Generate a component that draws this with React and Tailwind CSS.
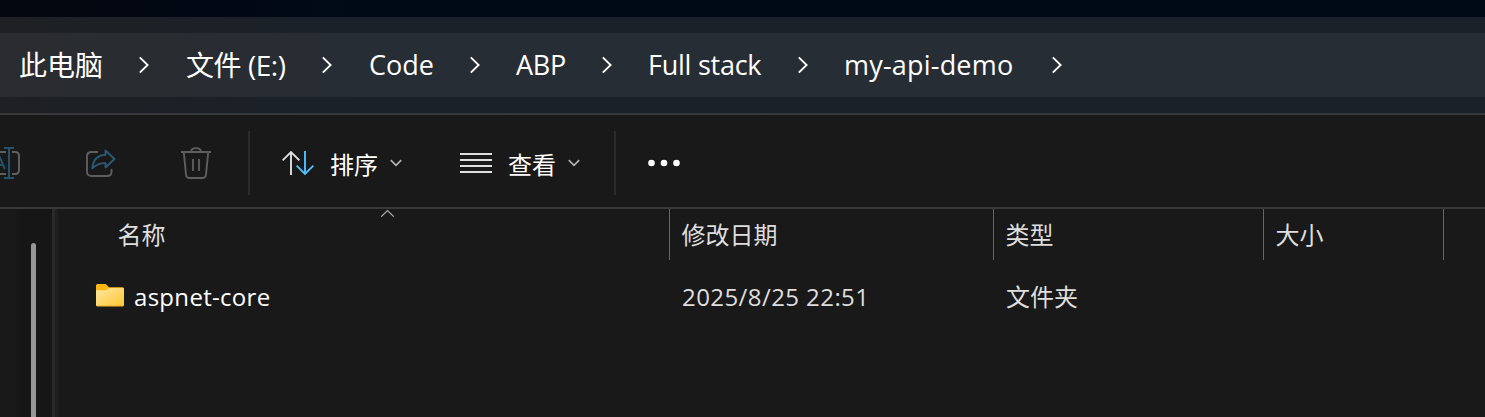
const crumbs = [
  { label: '此电脑', text: 'w-[119px] text-[28px] -ml-px mr-px' },
  { label: '文件 (E:)', text: 'w-[136px] text-[28px] tracking-[-0.45px]' },
  { label: 'Code', text: 'w-[101px] text-[27px]' },
  { label: 'ABP', text: 'w-[86px] text-[27px] tracking-[-0.3px]' },
  { label: 'Full stack', text: 'w-[150px] text-[27px] tracking-[-0.25px]' },
  { label: 'my-api-demo', text: 'w-[208px] text-[27px] tracking-[0.2px]' },
];
const gaps = ['w-[47px]', 'w-[47px]', 'w-[46px]', 'w-[46px]', 'w-[46px]', 'w-[46px]'];

function Crumb({ label, text, gap }) {
  return (
    <>
      <span className={`shrink-0 ${text}`}>{label}</span>
      <span className={`shrink-0 ${gap}`}>
        <svg className="block" width="11" height="18" viewBox="0 0 11 18" fill="none" stroke="#fff" strokeWidth="1.9">
          <path d="M.8 1.4 8.600 9 .8 16.600" />
        </svg>
      </span>
    </>
  );
}

function ChevronDown() {
  return (
    <svg className="block shrink-0" width="12" height="8" viewBox="0 0 12 8" fill="none" stroke="#b4b4b4" strokeWidth="1.7">
      <path d="M0.8 1.2 6 6.4 11.2 1.2" />
    </svg>
  );
}

function RenameIcon() {
  return (
    <svg className="block shrink-0" width="24" height="36" viewBox="0 0 24 36" fill="none" strokeWidth="2">
      <path d="M0 7H6M12 7H15Q19 7 19 11V25Q19 29 15 29H12M0 29H6" stroke="#5e5e5e" />
      <path d="M9 3V33M4 3H14M4 33H14M-5 24 -.3 12 4.8 24M0 20H3.3" stroke="#265369" />
    </svg>
  );
}

function ShareIcon() {
  return (
    <svg className="block shrink-0" width="32" height="36" viewBox="0 0 32 36" fill="none" strokeWidth="1.9">
      <path d="M13 7H6.5Q2 7 2 11.5V26.5Q2 31 6.5 31H22Q26.500 31 26.500 27V24" stroke="#5e5e5e" />
      <path d="M20.500 5.500 29.500 14 20.500 22.500V18.200C15 17.800 11.500 19.500 7.300 23.300C8 15 13 10.300 20.500 9.800Z" stroke="#2a5a74" strokeLinejoin="round" />
    </svg>
  );
}

function TrashIcon() {
  return (
    <svg className="block shrink-0" width="32" height="36" viewBox="0 0 32 36" fill="none" stroke="#5e5e5e" strokeWidth="1.9">
      <path d="M1 7H31M11 6.500C11.500 2 20.500 2 21 6.500M3.800 7.500 6 29.500Q6.400 33 9 33H23Q25.600 33 26 29.500L28.200 7.500M13 14V26M19 14V26" />
    </svg>
  );
}

function FolderIcon() {
  return (
    <svg className="block shrink-0" width="28" height="23" viewBox="0 0 28 23">
      <defs>
        <linearGradient id="folderFront" x1="0" y1="0" x2="1" y2="1">
          <stop offset="0" stopColor="#ffe8a2" />
          <stop offset="1" stopColor="#fcc633" />
        </linearGradient>
      </defs>
      <path d="M0 1.500Q0 0 1.500 0H9Q10 0 10.800 .9L13 3.200H26.500Q28 3.200 28 4.700V20H0Z" fill="#fbb814" />
      <path d="M0 7.200Q0 6.200 1 6.200H9.500Q10.800 6.200 11.600 5.400L12.700 4.400Q13.300 4 14 4H27Q28 4 28 5V21Q28 22.300 26.800 22.300H1.200Q0 22.300 0 21Z" fill="url(#folderFront)" />
      <path d="M.5 21.500Q.8 22 1.300 22H26.700Q27.200 22 27.500 21.500" fill="none" stroke="#e5a520" strokeWidth=".8" />
    </svg>
  );
}

function Column({ width, children }) {
  return <div className={`h-[51px] shrink-0 border-l border-[#666] pl-[11.5px] leading-[52px] ${width}`}>{children}</div>;
}

export default function App() {
  return (
    <div className="flex h-[417px] w-[1485px] flex-col overflow-hidden bg-[#191919] font-['Open_Sans','Noto_Sans_CJK_SC',sans-serif] whitespace-nowrap text-white">
      <div className="h-[17px] shrink-0 bg-linear-to-r from-[#03060e] via-[#000a17] via-25% to-[#000a17]" />
      <div className="h-[96px] shrink-0 bg-linear-to-r from-[#1e2023] to-[#1b2129] to-20% py-4">
        <nav className="flex h-16 items-center bg-linear-to-r from-[#2a2c2f] to-[#272d35] to-25% pl-5 leading-[64px]">
          {crumbs.map((c, i) => (
            <Crumb key={c.label} label={c.label} text={c.text} gap={gaps[i]} />
          ))}
        </nav>
      </div>
      <div className="flex h-[96px] shrink-0 items-center border-y-2 border-[#393939] pt-1 text-2xl">
        <div className="flex w-[248px] shrink-0 items-center">
          <RenameIcon />
          <div className="ml-[61px]"><ShareIcon /></div>
          <div className="ml-[63px]"><TrashIcon /></div>
        </div>
        <div className="h-16 w-0.5 shrink-0 bg-[#2b2b2b]" />
        <div className="flex h-16 w-[364px] shrink-0 items-center pl-8">
          <svg className="block shrink-0" width="32" height="26" viewBox="0 0 32 26" fill="none" strokeWidth="1.9">
            <path d="M9 25V2M.6 10.400 9 2 17.400 10.400" stroke="#e0e0e0" />
            <path d="M23 1V24M14.600 15.600 23 24 31.400 15.600" stroke="#4cc2ff" />
          </svg>
          <span className="box-content w-[60px] shrink-0 pt-1 pl-4">排序</span>
          <ChevronDown />
          <svg className="ml-[58px] block shrink-0" width="32" height="20" viewBox="0 0 32 20" stroke="#e0e0e0" strokeWidth="2">
            <path d="M0 1H32M0 7H32M0 13H32M0 19H32" />
          </svg>
          <span className="box-content w-[60px] shrink-0 pt-1 pl-4">查看</span>
          <ChevronDown />
        </div>
        <div className="h-16 w-0.5 shrink-0 bg-[#2b2b2b]" />
        <svg className="ml-8 block shrink-0" width="32" height="8" viewBox="0 0 32 8" fill="#fff">
          <circle cx="3.500" cy="4" r="3.300" />
          <circle cx="16" cy="4" r="3.300" />
          <circle cx="28.500" cy="4" r="3.300" />
        </svg>
      </div>
      <div className="flex min-h-0 flex-1">
        <aside className="flex w-[52px] shrink-0 bg-linear-to-r from-[#191919] from-30% to-[#161616] to-35% pt-[34px] pl-[31px]">
          <div className="w-[5px] rounded-t-full bg-[#979797]" />
        </aside>
        <div className="w-[3px] shrink-0 bg-[#2a2a2a]" />
        <div className="w-[3px] shrink-0 bg-[#1f1f1f]" />
        <main className="flex-1 text-2xl text-[#dedede]">
          <div className="flex h-[51px]">
            <div className="relative w-[611px] shrink-0 pl-[59.5px] leading-[52px]">
              名称
              <svg className="absolute top-0 left-[323px]" width="14" height="8" viewBox="0 0 14 8" fill="none" stroke="#ababab" strokeWidth="1.200">
                <path d="M.2 7.700 6.500 1.500 12.800 7.700" />
              </svg>
            </div>
            <Column width="w-[324px]">修改日期</Column>
            <Column width="w-[270px]">类型</Column>
            <Column width="w-[180px]">大小</Column>
            <Column width="w-[42px]" />
          </div>
          <div className="flex h-[74px] items-center leading-[74px]">
            <div className="flex w-[624px] shrink-0 items-center pl-[38px] text-white">
              <div className="-mt-1"><FolderIcon /></div>
              <span className="pl-[10px] tracking-[0.3px]">aspnet-core</span>
            </div>
            <span className="w-[324px] shrink-0 tracking-[0.42px]">2025/8/25 22:51</span>
            <span>文件夹</span>
          </div>
        </main>
      </div>
    </div>
  );
}
